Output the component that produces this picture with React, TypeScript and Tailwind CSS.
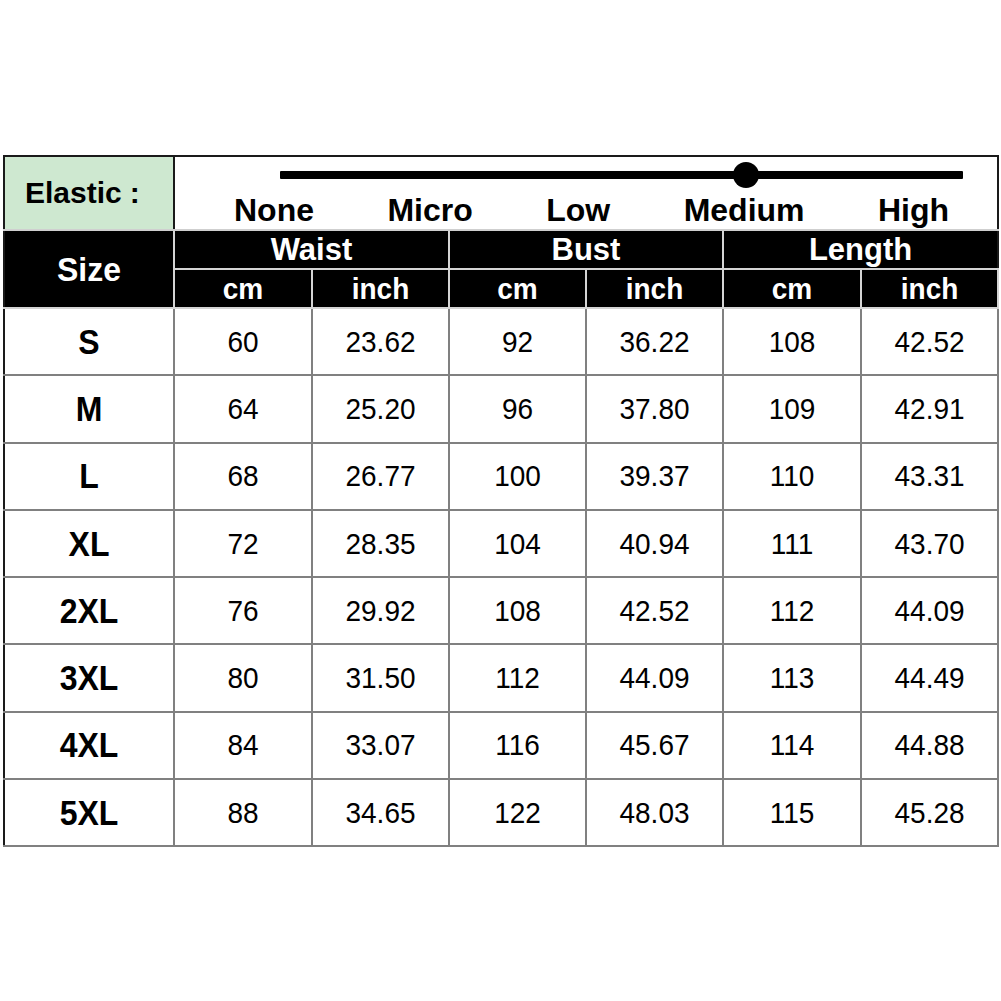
const rows = [
  ["S", "60", "23.62", "92", "36.22", "108", "42.52"],
  ["M", "64", "25.20", "96", "37.80", "109", "42.91"],
  ["L", "68", "26.77", "100", "39.37", "110", "43.31"],
  ["XL", "72", "28.35", "104", "40.94", "111", "43.70"],
  ["2XL", "76", "29.92", "108", "42.52", "112", "44.09"],
  ["3XL", "80", "31.50", "112", "44.09", "113", "44.49"],
  ["4XL", "84", "33.07", "116", "45.67", "114", "44.88"],
  ["5XL", "88", "34.65", "122", "48.03", "115", "45.28"],
];

const levels = ["None", "Micro", "Low", "Medium", "High"];

const App = () => {
  return (
    <div className="min-h-screen bg-white pt-[155px] pl-[3px] font-['Liberation_Sans',Arial,sans-serif] text-black">
      <table className="table-fixed border-collapse w-[996px]">
        <colgroup>
          <col className="w-[170px]" />
          <col className="w-[138px]" />
          <col className="w-[137px]" />
          <col className="w-[137px]" />
          <col className="w-[137px]" />
          <col className="w-[138px]" />
          <col className="w-[137px]" />
        </colgroup>
        <tbody>
          {/* elastic row */}
          <tr className="h-[74px]">
            <td className="border-2 border-[#1a1a1a] border-b-[#cfcfcf] bg-[#cee8d0] p-0 align-top">
              <div className="pt-[21px] pl-[20px] text-[30px] font-bold leading-none whitespace-nowrap">
                Elastic<span className="ml-[8px]">:</span>
              </div>
            </td>
            <td colSpan={6} className="border-2 border-[#1a1a1a] border-l-[#9a9a9a] border-b-[#cfcfcf] p-0 align-top">
              <div className="pt-[14px]">
                <div className="relative ml-[105px] mr-[34px] h-[8px] bg-black rounded-[1px]">
                  <div className="absolute left-[453px] top-[-9px] w-[26px] h-[26px] rounded-full bg-black" />
                </div>
                <div className="mt-[15px] pl-[59px] pr-[48px] flex justify-between text-[32px] font-bold leading-none">
                  {levels.map((l) => (
                    <span key={l}>{l}</span>
                  ))}
                </div>
              </div>
            </td>
          </tr>

          {/* header */}
          <tr className="h-[39px] bg-black text-white font-bold">
            <td rowSpan={2} className="border-2 border-l-[#1a1a1a] border-[#d4d4d4] text-center text-[32px] leading-none p-0">
              <span className="inline-block scale-y-[1.05]">Size</span>
            </td>
            <td colSpan={2} className="border-2 border-[#d4d4d4] text-center text-[31px] leading-none p-0">
              Waist
            </td>
            <td colSpan={2} className="border-2 border-[#d4d4d4] text-center text-[31px] leading-none p-0">
              Bust
            </td>
            <td colSpan={2} className="border-2 border-[#d4d4d4] border-r-[#1a1a1a] text-center text-[31px] leading-none p-0">
              Length
            </td>
          </tr>
          <tr className="h-[39px] bg-black text-white font-bold">
            {["cm", "inch", "cm", "inch", "cm", "inch"].map((u, i) => (
              <td key={i} className="border-2 border-[#d4d4d4] text-center text-[28px] leading-none p-0">
                <span className="inline-block scale-y-[1.08]">{u}</span>
              </td>
            ))}
          </tr>

          {/* data */}
          {rows.map((r) => (
            <tr key={r[0]} className="h-[67.3px]">
              {r.map((v, i) => (
                <td
                  key={i}
                  className={
                    i === 0
                      ? "border-2 border-[#808080] border-l-[#1a1a1a] text-center text-[32px] font-bold leading-none p-0"
                      : "border-2 border-[#808080] text-center text-[28px] leading-none p-0"
                  }
                >
                  <span className={i === 0 ? "inline-block scale-y-[1.1]" : "inline-block scale-y-[1.06]"}>{v}</span>
                </td>
              ))}
            </tr>
          ))}
        </tbody>
      </table>
    </div>
  );
};

export default App;
